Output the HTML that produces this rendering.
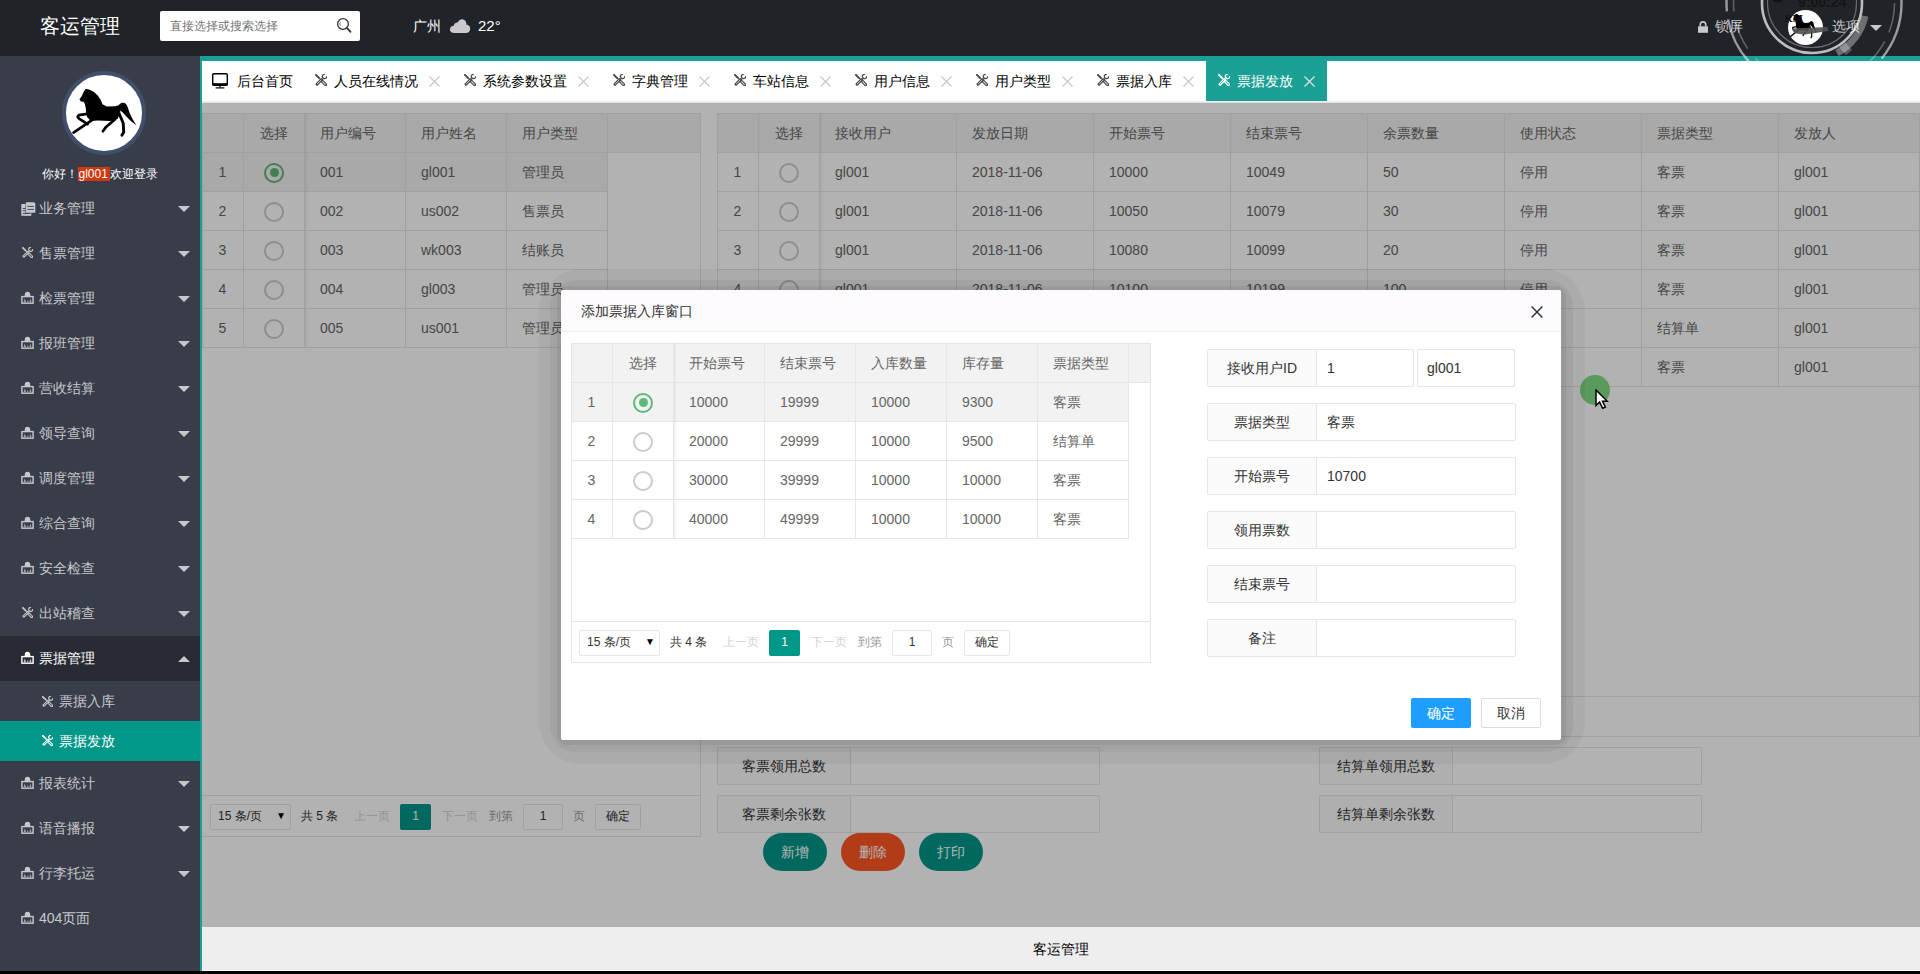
<!DOCTYPE html><html><head><meta charset="utf-8"><style>html,body{margin:0;padding:0}body{width:1920px;height:974px;overflow:hidden;position:relative;background:#fff;font-family:"Liberation Sans",sans-serif}</style></head><body><div style="position:absolute;left:0px;top:0px;width:1920px;height:56px;background:#202328"></div>
<div style="position:absolute;left:40px;top:13.0px;height:26px;line-height:26px;font-size:20px;color:#fff;white-space:nowrap;">客运管理</div>
<div style="position:absolute;left:160px;top:11px;width:200px;height:30px;background:#fff;border-radius:2px"></div>
<div style="position:absolute;left:170px;top:16.5px;height:18px;line-height:18px;font-size:12px;color:#757575;white-space:nowrap;">直接选择或搜索选择</div>
<svg style="position:absolute;left:336px;top:17px" width="17" height="17" viewBox="0 0 17 17"><circle cx="7" cy="7" r="5.4" fill="none" stroke="#333" stroke-width="1.3"/><path d="M4.6 5 A3 3 0 0 0 4.6 9" fill="none" stroke="#666" stroke-width="0.8"/><path d="M10.8 10.8 L14.5 14.8" stroke="#333" stroke-width="1.8" stroke-linecap="round"/></svg>
<div style="position:absolute;left:413px;top:16.0px;height:20px;line-height:20px;font-size:14px;color:#fff;white-space:nowrap;">广州</div>
<svg style="position:absolute;left:449px;top:18px" width="22" height="16" viewBox="0 0 22 16"><path d="M5 15 C1.8 15 0.6 12.8 1 10.8 C1.5 8.6 3.3 7.6 4.8 7.8 C5 5.5 6.8 4.2 8.6 4.6 C9.6 2.3 11.5 1 13.6 1.3 C16.3 1.7 17.6 4 17.4 6.6 C19.8 6.9 21.4 8.8 21.2 11.3 C21 13.6 19.2 15 17 15 Z" fill="#cbc9cc"/></svg>
<div style="position:absolute;left:478px;top:14.5px;height:21px;line-height:21px;font-size:15px;color:#fff;white-space:nowrap;">22°</div>
<svg style="position:absolute;left:1698px;top:20.5px" width="10" height="12" viewBox="0 0 10 12"><path d="M2.3 5.5 V3.6 A2.7 2.7 0 0 1 7.7 3.6 V5.5" fill="none" stroke="#c8c8cc" stroke-width="1.6"/><rect x="0" y="5.3" width="10" height="6.5" fill="#c8c8cc"/></svg>
<div style="position:absolute;left:1715px;top:16.0px;height:20px;line-height:20px;font-size:14px;color:#c8c8cc;white-space:nowrap;">锁屏</div>
<div style="position:absolute;left:1832px;top:16.0px;height:20px;line-height:20px;font-size:14px;color:#c8c8cc;white-space:nowrap;">选项</div>
<div style="position:absolute;left:1870px;top:25px;width:0;height:0;border-left:6px solid transparent;border-right:6px solid transparent;border-top:6px solid #c8c8cc"></div>
<div style="position:absolute;left:0px;top:56px;width:200px;height:915px;background:#393d4a"></div>
<div style="position:absolute;left:62px;top:71px;width:76px;height:76px;border-radius:50%;background:#fff;border:4px solid #40506a"></div>
<svg style="position:absolute;left:60px;top:70px" width="88" height="88" viewBox="0 0 974 974"><path d="M215,325 L240,290 L262,240 L285,208 L330,218 L380,245 L420,285 L450,330 L470,380 L520,405 L610,400 L650,390 L670,420 L665,470 L640,540 L560,565 L420,560 L340,565 L300,520 L290,470 L285,420 L275,375 L262,352 L232,350 Z" fill="#000"/><path d="M640,405 C670,345 735,345 752,420 C770,480 800,545 845,612 C790,575 740,520 700,475 C680,455 660,445 640,435 Z" fill="#000"/><g fill="none" stroke="#000" stroke-linecap="round" stroke-linejoin="round"><path d="M300,485 L210,500 Q180,515 215,540 L305,600" stroke-width="30"/><path d="M370,545 L150,692" stroke-width="30"/><path d="M610,545 L510,630 L475,678" stroke-width="30"/><path d="M650,470 L700,590 L705,690 L685,722" stroke-width="32"/></g></svg>
<div style="position:absolute;left:42px;top:164.5px;height:18px;line-height:18px;font-size:12px;color:#fff;white-space:nowrap;">你好！</div>
<div style="position:absolute;left:78px;top:167px;width:32px;height:14px;background:#d0380f"></div>
<div style="position:absolute;left:78.5px;top:164.5px;height:18px;line-height:18px;font-size:12px;color:#fff;white-space:nowrap;">gl001</div>
<div style="position:absolute;left:110px;top:164.5px;height:18px;line-height:18px;font-size:12px;color:#fff;white-space:nowrap;">欢迎登录</div>
<svg style="position:absolute;left:20.7px;top:202px" width="15" height="14" viewBox="0 0 15 14"><rect x="0.3" y="2" width="10" height="11.8" fill="#c8c8cc"/><path d="M1.8 6.5h3.2M1.8 8.7h3.2M1.8 11.5h7.5" stroke="#393d4a" stroke-width="0.9"/><path d="M4.6 0 H13 L14.6 1.6 V11 H4.6 Z" fill="#c8c8cc" stroke="#393d4a" stroke-width="0.5"/><path d="M6.5 4.4h6.4M6.5 7.4h6.4" stroke="#393d4a" stroke-width="0.9"/></svg>
<div style="position:absolute;left:39px;top:197.5px;height:20px;line-height:20px;font-size:14px;color:#c8c8cc;white-space:nowrap;">业务管理</div>
<div style="position:absolute;left:178px;top:205.5px;width:0;height:0;border-left:6px solid transparent;border-right:6px solid transparent;border-top:6px solid #c8c8cc"></div>
<svg style="position:absolute;left:21.7px;top:247px" width="11" height="11" viewBox="0 0 12 12"><path d="M0.9 0.9 L3.8 3.7" stroke="#c8c8cc" stroke-width="1.9" stroke-linecap="round"/><path d="M3.8 3.7 L6.6 6.6" stroke="#c8c8cc" stroke-width="1.1"/><path d="M7.4 7.4 L10.6 10.6" stroke="#c8c8cc" stroke-width="3.1" stroke-linecap="round"/><path d="M7.7 7.7 L10.3 10.3" stroke="#393d4a" stroke-width="1.1" stroke-linecap="round" opacity="0.8"/><path d="M6.6 5.6 L2 10.2" stroke="#c8c8cc" stroke-width="2.9" stroke-linecap="round"/><path d="M6.0 6.2 L2.4 9.8" stroke="#393d4a" stroke-width="1.0" stroke-linecap="round" opacity="0.8"/><path d="M11.67 2.12 A2.2 2.2 0 1 1 9.88 0.33" fill="none" stroke="#c8c8cc" stroke-width="1.3"/></svg>
<div style="position:absolute;left:39px;top:242.5px;height:20px;line-height:20px;font-size:14px;color:#c8c8cc;white-space:nowrap;">售票管理</div>
<div style="position:absolute;left:178px;top:250.5px;width:0;height:0;border-left:6px solid transparent;border-right:6px solid transparent;border-top:6px solid #c8c8cc"></div>
<svg style="position:absolute;left:20.6px;top:291px" width="13" height="13" viewBox="0 0 13 13"><path d="M3.6 5.2 L4 2 Q6.5 -0.3 9 2 L9.4 5.2 Z" fill="#c8c8cc"/><rect x="0.9" y="5.6" width="11.2" height="6.6" fill="none" stroke="#c8c8cc" stroke-width="1.4"/><path d="M2.5 11.3 L3.8 7.6 L5.1 11.3 Z M6 11.3 L6.8 8.8 L7.6 11.3 Z M8.3 11.3 L9.4 7.6 L10.5 11.3 Z" fill="#c8c8cc" opacity="0.75"/></svg>
<div style="position:absolute;left:39px;top:287.5px;height:20px;line-height:20px;font-size:14px;color:#c8c8cc;white-space:nowrap;">检票管理</div>
<div style="position:absolute;left:178px;top:295.5px;width:0;height:0;border-left:6px solid transparent;border-right:6px solid transparent;border-top:6px solid #c8c8cc"></div>
<svg style="position:absolute;left:20.6px;top:336px" width="13" height="13" viewBox="0 0 13 13"><path d="M3.6 5.2 L4 2 Q6.5 -0.3 9 2 L9.4 5.2 Z" fill="#c8c8cc"/><rect x="0.9" y="5.6" width="11.2" height="6.6" fill="none" stroke="#c8c8cc" stroke-width="1.4"/><path d="M2.5 11.3 L3.8 7.6 L5.1 11.3 Z M6 11.3 L6.8 8.8 L7.6 11.3 Z M8.3 11.3 L9.4 7.6 L10.5 11.3 Z" fill="#c8c8cc" opacity="0.75"/></svg>
<div style="position:absolute;left:39px;top:332.5px;height:20px;line-height:20px;font-size:14px;color:#c8c8cc;white-space:nowrap;">报班管理</div>
<div style="position:absolute;left:178px;top:340.5px;width:0;height:0;border-left:6px solid transparent;border-right:6px solid transparent;border-top:6px solid #c8c8cc"></div>
<svg style="position:absolute;left:20.6px;top:381px" width="13" height="13" viewBox="0 0 13 13"><path d="M3.6 5.2 L4 2 Q6.5 -0.3 9 2 L9.4 5.2 Z" fill="#c8c8cc"/><rect x="0.9" y="5.6" width="11.2" height="6.6" fill="none" stroke="#c8c8cc" stroke-width="1.4"/><path d="M2.5 11.3 L3.8 7.6 L5.1 11.3 Z M6 11.3 L6.8 8.8 L7.6 11.3 Z M8.3 11.3 L9.4 7.6 L10.5 11.3 Z" fill="#c8c8cc" opacity="0.75"/></svg>
<div style="position:absolute;left:39px;top:377.5px;height:20px;line-height:20px;font-size:14px;color:#c8c8cc;white-space:nowrap;">营收结算</div>
<div style="position:absolute;left:178px;top:385.5px;width:0;height:0;border-left:6px solid transparent;border-right:6px solid transparent;border-top:6px solid #c8c8cc"></div>
<svg style="position:absolute;left:20.6px;top:426px" width="13" height="13" viewBox="0 0 13 13"><path d="M3.6 5.2 L4 2 Q6.5 -0.3 9 2 L9.4 5.2 Z" fill="#c8c8cc"/><rect x="0.9" y="5.6" width="11.2" height="6.6" fill="none" stroke="#c8c8cc" stroke-width="1.4"/><path d="M2.5 11.3 L3.8 7.6 L5.1 11.3 Z M6 11.3 L6.8 8.8 L7.6 11.3 Z M8.3 11.3 L9.4 7.6 L10.5 11.3 Z" fill="#c8c8cc" opacity="0.75"/></svg>
<div style="position:absolute;left:39px;top:422.5px;height:20px;line-height:20px;font-size:14px;color:#c8c8cc;white-space:nowrap;">领导查询</div>
<div style="position:absolute;left:178px;top:430.5px;width:0;height:0;border-left:6px solid transparent;border-right:6px solid transparent;border-top:6px solid #c8c8cc"></div>
<svg style="position:absolute;left:20.6px;top:471px" width="13" height="13" viewBox="0 0 13 13"><path d="M3.6 5.2 L4 2 Q6.5 -0.3 9 2 L9.4 5.2 Z" fill="#c8c8cc"/><rect x="0.9" y="5.6" width="11.2" height="6.6" fill="none" stroke="#c8c8cc" stroke-width="1.4"/><path d="M2.5 11.3 L3.8 7.6 L5.1 11.3 Z M6 11.3 L6.8 8.8 L7.6 11.3 Z M8.3 11.3 L9.4 7.6 L10.5 11.3 Z" fill="#c8c8cc" opacity="0.75"/></svg>
<div style="position:absolute;left:39px;top:467.5px;height:20px;line-height:20px;font-size:14px;color:#c8c8cc;white-space:nowrap;">调度管理</div>
<div style="position:absolute;left:178px;top:475.5px;width:0;height:0;border-left:6px solid transparent;border-right:6px solid transparent;border-top:6px solid #c8c8cc"></div>
<svg style="position:absolute;left:20.6px;top:516px" width="13" height="13" viewBox="0 0 13 13"><path d="M3.6 5.2 L4 2 Q6.5 -0.3 9 2 L9.4 5.2 Z" fill="#c8c8cc"/><rect x="0.9" y="5.6" width="11.2" height="6.6" fill="none" stroke="#c8c8cc" stroke-width="1.4"/><path d="M2.5 11.3 L3.8 7.6 L5.1 11.3 Z M6 11.3 L6.8 8.8 L7.6 11.3 Z M8.3 11.3 L9.4 7.6 L10.5 11.3 Z" fill="#c8c8cc" opacity="0.75"/></svg>
<div style="position:absolute;left:39px;top:512.5px;height:20px;line-height:20px;font-size:14px;color:#c8c8cc;white-space:nowrap;">综合查询</div>
<div style="position:absolute;left:178px;top:520.5px;width:0;height:0;border-left:6px solid transparent;border-right:6px solid transparent;border-top:6px solid #c8c8cc"></div>
<svg style="position:absolute;left:20.6px;top:561px" width="13" height="13" viewBox="0 0 13 13"><path d="M3.6 5.2 L4 2 Q6.5 -0.3 9 2 L9.4 5.2 Z" fill="#c8c8cc"/><rect x="0.9" y="5.6" width="11.2" height="6.6" fill="none" stroke="#c8c8cc" stroke-width="1.4"/><path d="M2.5 11.3 L3.8 7.6 L5.1 11.3 Z M6 11.3 L6.8 8.8 L7.6 11.3 Z M8.3 11.3 L9.4 7.6 L10.5 11.3 Z" fill="#c8c8cc" opacity="0.75"/></svg>
<div style="position:absolute;left:39px;top:557.5px;height:20px;line-height:20px;font-size:14px;color:#c8c8cc;white-space:nowrap;">安全检查</div>
<div style="position:absolute;left:178px;top:565.5px;width:0;height:0;border-left:6px solid transparent;border-right:6px solid transparent;border-top:6px solid #c8c8cc"></div>
<svg style="position:absolute;left:21.7px;top:607px" width="11" height="11" viewBox="0 0 12 12"><path d="M0.9 0.9 L3.8 3.7" stroke="#c8c8cc" stroke-width="1.9" stroke-linecap="round"/><path d="M3.8 3.7 L6.6 6.6" stroke="#c8c8cc" stroke-width="1.1"/><path d="M7.4 7.4 L10.6 10.6" stroke="#c8c8cc" stroke-width="3.1" stroke-linecap="round"/><path d="M7.7 7.7 L10.3 10.3" stroke="#393d4a" stroke-width="1.1" stroke-linecap="round" opacity="0.8"/><path d="M6.6 5.6 L2 10.2" stroke="#c8c8cc" stroke-width="2.9" stroke-linecap="round"/><path d="M6.0 6.2 L2.4 9.8" stroke="#393d4a" stroke-width="1.0" stroke-linecap="round" opacity="0.8"/><path d="M11.67 2.12 A2.2 2.2 0 1 1 9.88 0.33" fill="none" stroke="#c8c8cc" stroke-width="1.3"/></svg>
<div style="position:absolute;left:39px;top:602.5px;height:20px;line-height:20px;font-size:14px;color:#c8c8cc;white-space:nowrap;">出站稽查</div>
<div style="position:absolute;left:178px;top:610.5px;width:0;height:0;border-left:6px solid transparent;border-right:6px solid transparent;border-top:6px solid #c8c8cc"></div>
<div style="position:absolute;left:0px;top:636px;width:200px;height:45px;background:#282b33"></div>
<svg style="position:absolute;left:20.6px;top:651px" width="13" height="13" viewBox="0 0 13 13"><path d="M3.6 5.2 L4 2 Q6.5 -0.3 9 2 L9.4 5.2 Z" fill="#fff"/><rect x="0.9" y="5.6" width="11.2" height="6.6" fill="none" stroke="#fff" stroke-width="1.4"/><path d="M2.5 11.3 L3.8 7.6 L5.1 11.3 Z M6 11.3 L6.8 8.8 L7.6 11.3 Z M8.3 11.3 L9.4 7.6 L10.5 11.3 Z" fill="#fff" opacity="0.75"/></svg>
<div style="position:absolute;left:39px;top:647.5px;height:20px;line-height:20px;font-size:14px;color:#fff;white-space:nowrap;">票据管理</div>
<div style="position:absolute;left:178px;top:656px;width:0;height:0;border-left:6px solid transparent;border-right:6px solid transparent;border-bottom:6px solid #c8c8cc"></div>
<svg style="position:absolute;left:42px;top:695.6px" width="11" height="11" viewBox="0 0 12 12"><path d="M0.9 0.9 L3.8 3.7" stroke="#c8c8cc" stroke-width="1.9" stroke-linecap="round"/><path d="M3.8 3.7 L6.6 6.6" stroke="#c8c8cc" stroke-width="1.1"/><path d="M7.4 7.4 L10.6 10.6" stroke="#c8c8cc" stroke-width="3.1" stroke-linecap="round"/><path d="M7.7 7.7 L10.3 10.3" stroke="#393d4a" stroke-width="1.1" stroke-linecap="round" opacity="0.8"/><path d="M6.6 5.6 L2 10.2" stroke="#c8c8cc" stroke-width="2.9" stroke-linecap="round"/><path d="M6.0 6.2 L2.4 9.8" stroke="#393d4a" stroke-width="1.0" stroke-linecap="round" opacity="0.8"/><path d="M11.67 2.12 A2.2 2.2 0 1 1 9.88 0.33" fill="none" stroke="#c8c8cc" stroke-width="1.3"/></svg>
<div style="position:absolute;left:59px;top:691.0px;height:20px;line-height:20px;font-size:14px;color:#c8c8cc;white-space:nowrap;">票据入库</div>
<div style="position:absolute;left:0px;top:721px;width:200px;height:40px;background:#009688"></div>
<svg style="position:absolute;left:42px;top:735px" width="11" height="11" viewBox="0 0 12 12"><path d="M0.9 0.9 L3.8 3.7" stroke="#fff" stroke-width="1.9" stroke-linecap="round"/><path d="M3.8 3.7 L6.6 6.6" stroke="#fff" stroke-width="1.1"/><path d="M7.4 7.4 L10.6 10.6" stroke="#fff" stroke-width="3.1" stroke-linecap="round"/><path d="M7.7 7.7 L10.3 10.3" stroke="#009688" stroke-width="1.1" stroke-linecap="round" opacity="0.8"/><path d="M6.6 5.6 L2 10.2" stroke="#fff" stroke-width="2.9" stroke-linecap="round"/><path d="M6.0 6.2 L2.4 9.8" stroke="#009688" stroke-width="1.0" stroke-linecap="round" opacity="0.8"/><path d="M11.67 2.12 A2.2 2.2 0 1 1 9.88 0.33" fill="none" stroke="#fff" stroke-width="1.3"/></svg>
<div style="position:absolute;left:59px;top:731.0px;height:20px;line-height:20px;font-size:14px;color:#fff;white-space:nowrap;">票据发放</div>
<svg style="position:absolute;left:20.6px;top:776px" width="13" height="13" viewBox="0 0 13 13"><path d="M3.6 5.2 L4 2 Q6.5 -0.3 9 2 L9.4 5.2 Z" fill="#c8c8cc"/><rect x="0.9" y="5.6" width="11.2" height="6.6" fill="none" stroke="#c8c8cc" stroke-width="1.4"/><path d="M2.5 11.3 L3.8 7.6 L5.1 11.3 Z M6 11.3 L6.8 8.8 L7.6 11.3 Z M8.3 11.3 L9.4 7.6 L10.5 11.3 Z" fill="#c8c8cc" opacity="0.75"/></svg>
<div style="position:absolute;left:39px;top:772.5px;height:20px;line-height:20px;font-size:14px;color:#c8c8cc;white-space:nowrap;">报表统计</div>
<div style="position:absolute;left:178px;top:780.5px;width:0;height:0;border-left:6px solid transparent;border-right:6px solid transparent;border-top:6px solid #c8c8cc"></div>
<svg style="position:absolute;left:20.6px;top:821px" width="13" height="13" viewBox="0 0 13 13"><path d="M3.6 5.2 L4 2 Q6.5 -0.3 9 2 L9.4 5.2 Z" fill="#c8c8cc"/><rect x="0.9" y="5.6" width="11.2" height="6.6" fill="none" stroke="#c8c8cc" stroke-width="1.4"/><path d="M2.5 11.3 L3.8 7.6 L5.1 11.3 Z M6 11.3 L6.8 8.8 L7.6 11.3 Z M8.3 11.3 L9.4 7.6 L10.5 11.3 Z" fill="#c8c8cc" opacity="0.75"/></svg>
<div style="position:absolute;left:39px;top:817.5px;height:20px;line-height:20px;font-size:14px;color:#c8c8cc;white-space:nowrap;">语音播报</div>
<div style="position:absolute;left:178px;top:825.5px;width:0;height:0;border-left:6px solid transparent;border-right:6px solid transparent;border-top:6px solid #c8c8cc"></div>
<svg style="position:absolute;left:20.6px;top:866px" width="13" height="13" viewBox="0 0 13 13"><path d="M3.6 5.2 L4 2 Q6.5 -0.3 9 2 L9.4 5.2 Z" fill="#c8c8cc"/><rect x="0.9" y="5.6" width="11.2" height="6.6" fill="none" stroke="#c8c8cc" stroke-width="1.4"/><path d="M2.5 11.3 L3.8 7.6 L5.1 11.3 Z M6 11.3 L6.8 8.8 L7.6 11.3 Z M8.3 11.3 L9.4 7.6 L10.5 11.3 Z" fill="#c8c8cc" opacity="0.75"/></svg>
<div style="position:absolute;left:39px;top:862.5px;height:20px;line-height:20px;font-size:14px;color:#c8c8cc;white-space:nowrap;">行李托运</div>
<div style="position:absolute;left:178px;top:870.5px;width:0;height:0;border-left:6px solid transparent;border-right:6px solid transparent;border-top:6px solid #c8c8cc"></div>
<svg style="position:absolute;left:20.6px;top:911px" width="13" height="13" viewBox="0 0 13 13"><path d="M3.6 5.2 L4 2 Q6.5 -0.3 9 2 L9.4 5.2 Z" fill="#c8c8cc"/><rect x="0.9" y="5.6" width="11.2" height="6.6" fill="none" stroke="#c8c8cc" stroke-width="1.4"/><path d="M2.5 11.3 L3.8 7.6 L5.1 11.3 Z M6 11.3 L6.8 8.8 L7.6 11.3 Z M8.3 11.3 L9.4 7.6 L10.5 11.3 Z" fill="#c8c8cc" opacity="0.75"/></svg>
<div style="position:absolute;left:39px;top:907.5px;height:20px;line-height:20px;font-size:14px;color:#c8c8cc;white-space:nowrap;">404页面</div>
<div style="position:absolute;left:200px;top:56px;width:1720px;height:915px;background:#fff"></div>
<div style="position:absolute;left:200px;top:56px;width:2px;height:915px;background:#1aa094"></div>
<div style="position:absolute;left:202px;top:56px;width:1718px;height:5px;background:#1aa094"></div>
<svg style="position:absolute;left:1700px;top:0" width="220" height="61" viewBox="1700 0 220 61"><circle cx="1812" cy="3" r="50" fill="none" stroke="rgba(255,255,255,.7)" stroke-width="2.6"/><circle cx="1812" cy="3" r="44.5" fill="none" stroke="rgba(255,255,255,.32)" stroke-width="1.2"/><path d="M1865 16 A55 55 0 0 1 1837 53" fill="none" stroke="rgba(255,255,255,.35)" stroke-width="7"/><path d="M1845 42 L1852 50 L1846 55 L1839 47 Z" fill="rgba(255,255,255,.25)"/><circle cx="1814" cy="3" r="87.5" fill="none" stroke="rgba(255,255,255,.55)" stroke-width="2.4" stroke-dasharray="60 8 25 6"/><circle cx="1814" cy="3" r="80.5" fill="none" stroke="rgba(255,255,255,.28)" stroke-width="1.6" stroke-dasharray="30 10 50 12"/></svg>
<div style="position:absolute;left:1788px;top:9.5px;width:35px;height:35px;border-radius:50%;background:#fff;overflow:hidden"></div>
<svg style="position:absolute;left:1785px;top:3.8px" width="37" height="45.5" viewBox="0 0 974 974" preserveAspectRatio="none"><path d="M215,325 L240,290 L262,240 L285,208 L330,218 L380,245 L420,285 L450,330 L470,380 L520,405 L610,400 L650,390 L670,420 L665,470 L640,540 L560,565 L420,560 L340,565 L300,520 L290,470 L285,420 L275,375 L262,352 L232,350 Z" fill="#000"/><path d="M640,405 C670,345 735,345 752,420 C770,480 800,545 845,612 C790,575 740,520 700,475 C680,455 660,445 640,435 Z" fill="#000"/><g fill="none" stroke="#000" stroke-linecap="round" stroke-linejoin="round"><path d="M300,485 L210,500 Q180,515 215,540 L305,600" stroke-width="30"/><path d="M370,545 L150,692" stroke-width="30"/><path d="M610,545 L510,630 L475,678" stroke-width="30"/><path d="M650,470 L700,590 L705,690 L685,722" stroke-width="32"/></g></svg>
<svg style="position:absolute;left:1780px;top:4px" width="60" height="46" viewBox="0 0 60 46"><path d="M11.8 24.6 L47 23 L48.7 27 L23.6 30.7 L14 29 Z" fill="#505050" opacity="0.9"/><text x="4.5" y="17.5" font-family="Liberation Serif" font-weight="bold" font-size="11" fill="#111">RM</text></svg>
<div style="position:absolute;left:1798px;top:-6px;height:16px;line-height:16px;font-size:14px;font-weight:bold;color:#141414;white-space:nowrap">9:00:24</div>
<div style="position:absolute;left:1773px;top:0;width:9px;height:2px;background:#141414"></div>
<div style="position:absolute;left:202px;top:61px;width:1718px;height:40px;background:#fff"></div>
<div style="position:absolute;left:202px;top:101px;width:1718px;height:1px;background:#f0eff0"></div>
<div style="position:absolute;left:202px;top:102px;width:1718px;height:1px;background:#e2e2e2"></div>
<svg style="position:absolute;left:212px;top:72.5px" width="16" height="16" viewBox="0 0 16 16"><rect x="0.7" y="0.7" width="14.6" height="11.6" rx="1.2" fill="none" stroke="#000" stroke-width="1.4"/><rect x="0.7" y="10.2" width="14.6" height="2.1" fill="#000"/><path d="M8 12.3v2" stroke="#000" stroke-width="1.4"/><path d="M3.6 14.9h8.8" stroke="#000" stroke-width="1.2"/></svg>
<div style="position:absolute;left:237px;top:71.0px;height:20px;line-height:20px;font-size:14px;color:#000;white-space:nowrap;">后台首页</div>
<svg style="position:absolute;left:315px;top:74px" width="12" height="12" viewBox="0 0 12 12"><path d="M0.9 0.9 L3.8 3.7" stroke="#484848" stroke-width="1.9" stroke-linecap="round"/><path d="M3.8 3.7 L6.6 6.6" stroke="#484848" stroke-width="1.1"/><path d="M7.4 7.4 L10.6 10.6" stroke="#484848" stroke-width="3.1" stroke-linecap="round"/><path d="M7.7 7.7 L10.3 10.3" stroke="#fff" stroke-width="1.1" stroke-linecap="round" opacity="0.8"/><path d="M6.6 5.6 L2 10.2" stroke="#484848" stroke-width="2.9" stroke-linecap="round"/><path d="M6.0 6.2 L2.4 9.8" stroke="#fff" stroke-width="1.0" stroke-linecap="round" opacity="0.8"/><path d="M11.67 2.12 A2.2 2.2 0 1 1 9.88 0.33" fill="none" stroke="#484848" stroke-width="1.3"/></svg>
<div style="position:absolute;left:334px;top:71.0px;height:20px;line-height:20px;font-size:14px;color:#000;white-space:nowrap;">人员在线情况</div>
<svg style="position:absolute;left:429px;top:76px" width="11" height="11" viewBox="0 0 11 11"><path d="M0.5 0.5 L10.5 10.5 M10.5 0.5 L0.5 10.5" stroke="#c8c8c8" stroke-width="1.2"/></svg>
<svg style="position:absolute;left:464px;top:74px" width="12" height="12" viewBox="0 0 12 12"><path d="M0.9 0.9 L3.8 3.7" stroke="#484848" stroke-width="1.9" stroke-linecap="round"/><path d="M3.8 3.7 L6.6 6.6" stroke="#484848" stroke-width="1.1"/><path d="M7.4 7.4 L10.6 10.6" stroke="#484848" stroke-width="3.1" stroke-linecap="round"/><path d="M7.7 7.7 L10.3 10.3" stroke="#fff" stroke-width="1.1" stroke-linecap="round" opacity="0.8"/><path d="M6.6 5.6 L2 10.2" stroke="#484848" stroke-width="2.9" stroke-linecap="round"/><path d="M6.0 6.2 L2.4 9.8" stroke="#fff" stroke-width="1.0" stroke-linecap="round" opacity="0.8"/><path d="M11.67 2.12 A2.2 2.2 0 1 1 9.88 0.33" fill="none" stroke="#484848" stroke-width="1.3"/></svg>
<div style="position:absolute;left:483px;top:71.0px;height:20px;line-height:20px;font-size:14px;color:#000;white-space:nowrap;">系统参数设置</div>
<svg style="position:absolute;left:578px;top:76px" width="11" height="11" viewBox="0 0 11 11"><path d="M0.5 0.5 L10.5 10.5 M10.5 0.5 L0.5 10.5" stroke="#c8c8c8" stroke-width="1.2"/></svg>
<svg style="position:absolute;left:613px;top:74px" width="12" height="12" viewBox="0 0 12 12"><path d="M0.9 0.9 L3.8 3.7" stroke="#484848" stroke-width="1.9" stroke-linecap="round"/><path d="M3.8 3.7 L6.6 6.6" stroke="#484848" stroke-width="1.1"/><path d="M7.4 7.4 L10.6 10.6" stroke="#484848" stroke-width="3.1" stroke-linecap="round"/><path d="M7.7 7.7 L10.3 10.3" stroke="#fff" stroke-width="1.1" stroke-linecap="round" opacity="0.8"/><path d="M6.6 5.6 L2 10.2" stroke="#484848" stroke-width="2.9" stroke-linecap="round"/><path d="M6.0 6.2 L2.4 9.8" stroke="#fff" stroke-width="1.0" stroke-linecap="round" opacity="0.8"/><path d="M11.67 2.12 A2.2 2.2 0 1 1 9.88 0.33" fill="none" stroke="#484848" stroke-width="1.3"/></svg>
<div style="position:absolute;left:632px;top:71.0px;height:20px;line-height:20px;font-size:14px;color:#000;white-space:nowrap;">字典管理</div>
<svg style="position:absolute;left:699px;top:76px" width="11" height="11" viewBox="0 0 11 11"><path d="M0.5 0.5 L10.5 10.5 M10.5 0.5 L0.5 10.5" stroke="#c8c8c8" stroke-width="1.2"/></svg>
<svg style="position:absolute;left:734px;top:74px" width="12" height="12" viewBox="0 0 12 12"><path d="M0.9 0.9 L3.8 3.7" stroke="#484848" stroke-width="1.9" stroke-linecap="round"/><path d="M3.8 3.7 L6.6 6.6" stroke="#484848" stroke-width="1.1"/><path d="M7.4 7.4 L10.6 10.6" stroke="#484848" stroke-width="3.1" stroke-linecap="round"/><path d="M7.7 7.7 L10.3 10.3" stroke="#fff" stroke-width="1.1" stroke-linecap="round" opacity="0.8"/><path d="M6.6 5.6 L2 10.2" stroke="#484848" stroke-width="2.9" stroke-linecap="round"/><path d="M6.0 6.2 L2.4 9.8" stroke="#fff" stroke-width="1.0" stroke-linecap="round" opacity="0.8"/><path d="M11.67 2.12 A2.2 2.2 0 1 1 9.88 0.33" fill="none" stroke="#484848" stroke-width="1.3"/></svg>
<div style="position:absolute;left:753px;top:71.0px;height:20px;line-height:20px;font-size:14px;color:#000;white-space:nowrap;">车站信息</div>
<svg style="position:absolute;left:820px;top:76px" width="11" height="11" viewBox="0 0 11 11"><path d="M0.5 0.5 L10.5 10.5 M10.5 0.5 L0.5 10.5" stroke="#c8c8c8" stroke-width="1.2"/></svg>
<svg style="position:absolute;left:855px;top:74px" width="12" height="12" viewBox="0 0 12 12"><path d="M0.9 0.9 L3.8 3.7" stroke="#484848" stroke-width="1.9" stroke-linecap="round"/><path d="M3.8 3.7 L6.6 6.6" stroke="#484848" stroke-width="1.1"/><path d="M7.4 7.4 L10.6 10.6" stroke="#484848" stroke-width="3.1" stroke-linecap="round"/><path d="M7.7 7.7 L10.3 10.3" stroke="#fff" stroke-width="1.1" stroke-linecap="round" opacity="0.8"/><path d="M6.6 5.6 L2 10.2" stroke="#484848" stroke-width="2.9" stroke-linecap="round"/><path d="M6.0 6.2 L2.4 9.8" stroke="#fff" stroke-width="1.0" stroke-linecap="round" opacity="0.8"/><path d="M11.67 2.12 A2.2 2.2 0 1 1 9.88 0.33" fill="none" stroke="#484848" stroke-width="1.3"/></svg>
<div style="position:absolute;left:874px;top:71.0px;height:20px;line-height:20px;font-size:14px;color:#000;white-space:nowrap;">用户信息</div>
<svg style="position:absolute;left:941px;top:76px" width="11" height="11" viewBox="0 0 11 11"><path d="M0.5 0.5 L10.5 10.5 M10.5 0.5 L0.5 10.5" stroke="#c8c8c8" stroke-width="1.2"/></svg>
<svg style="position:absolute;left:976px;top:74px" width="12" height="12" viewBox="0 0 12 12"><path d="M0.9 0.9 L3.8 3.7" stroke="#484848" stroke-width="1.9" stroke-linecap="round"/><path d="M3.8 3.7 L6.6 6.6" stroke="#484848" stroke-width="1.1"/><path d="M7.4 7.4 L10.6 10.6" stroke="#484848" stroke-width="3.1" stroke-linecap="round"/><path d="M7.7 7.7 L10.3 10.3" stroke="#fff" stroke-width="1.1" stroke-linecap="round" opacity="0.8"/><path d="M6.6 5.6 L2 10.2" stroke="#484848" stroke-width="2.9" stroke-linecap="round"/><path d="M6.0 6.2 L2.4 9.8" stroke="#fff" stroke-width="1.0" stroke-linecap="round" opacity="0.8"/><path d="M11.67 2.12 A2.2 2.2 0 1 1 9.88 0.33" fill="none" stroke="#484848" stroke-width="1.3"/></svg>
<div style="position:absolute;left:995px;top:71.0px;height:20px;line-height:20px;font-size:14px;color:#000;white-space:nowrap;">用户类型</div>
<svg style="position:absolute;left:1062px;top:76px" width="11" height="11" viewBox="0 0 11 11"><path d="M0.5 0.5 L10.5 10.5 M10.5 0.5 L0.5 10.5" stroke="#c8c8c8" stroke-width="1.2"/></svg>
<svg style="position:absolute;left:1097px;top:74px" width="12" height="12" viewBox="0 0 12 12"><path d="M0.9 0.9 L3.8 3.7" stroke="#484848" stroke-width="1.9" stroke-linecap="round"/><path d="M3.8 3.7 L6.6 6.6" stroke="#484848" stroke-width="1.1"/><path d="M7.4 7.4 L10.6 10.6" stroke="#484848" stroke-width="3.1" stroke-linecap="round"/><path d="M7.7 7.7 L10.3 10.3" stroke="#fff" stroke-width="1.1" stroke-linecap="round" opacity="0.8"/><path d="M6.6 5.6 L2 10.2" stroke="#484848" stroke-width="2.9" stroke-linecap="round"/><path d="M6.0 6.2 L2.4 9.8" stroke="#fff" stroke-width="1.0" stroke-linecap="round" opacity="0.8"/><path d="M11.67 2.12 A2.2 2.2 0 1 1 9.88 0.33" fill="none" stroke="#484848" stroke-width="1.3"/></svg>
<div style="position:absolute;left:1116px;top:71.0px;height:20px;line-height:20px;font-size:14px;color:#000;white-space:nowrap;">票据入库</div>
<svg style="position:absolute;left:1183px;top:76px" width="11" height="11" viewBox="0 0 11 11"><path d="M0.5 0.5 L10.5 10.5 M10.5 0.5 L0.5 10.5" stroke="#c8c8c8" stroke-width="1.2"/></svg>
<div style="position:absolute;left:1206px;top:61px;width:121px;height:40px;background:#1aa094"></div>
<svg style="position:absolute;left:1218px;top:74px" width="12" height="12" viewBox="0 0 12 12"><path d="M0.9 0.9 L3.8 3.7" stroke="#fff" stroke-width="1.9" stroke-linecap="round"/><path d="M3.8 3.7 L6.6 6.6" stroke="#fff" stroke-width="1.1"/><path d="M7.4 7.4 L10.6 10.6" stroke="#fff" stroke-width="3.1" stroke-linecap="round"/><path d="M7.7 7.7 L10.3 10.3" stroke="#1aa094" stroke-width="1.1" stroke-linecap="round" opacity="0.8"/><path d="M6.6 5.6 L2 10.2" stroke="#fff" stroke-width="2.9" stroke-linecap="round"/><path d="M6.0 6.2 L2.4 9.8" stroke="#1aa094" stroke-width="1.0" stroke-linecap="round" opacity="0.8"/><path d="M11.67 2.12 A2.2 2.2 0 1 1 9.88 0.33" fill="none" stroke="#fff" stroke-width="1.3"/></svg>
<div style="position:absolute;left:1237px;top:71.0px;height:20px;line-height:20px;font-size:14px;color:#fff;white-space:nowrap;">票据发放</div>
<svg style="position:absolute;left:1304px;top:76px" width="11" height="11" viewBox="0 0 11 11"><path d="M0.5 0.5 L10.5 10.5 M10.5 0.5 L0.5 10.5" stroke="#e0e0e0" stroke-width="1.2"/></svg>
<div style="position:absolute;left:202px;top:113px;width:499px;height:40px;background:#f2f2f2;border-top:1px solid #e6e6e6;border-bottom:1px solid #e6e6e6;box-sizing:border-box"></div>
<div style="position:absolute;left:202px;top:153px;width:405px;height:39px;background:#f2f2f2;border-bottom:1px solid #e6e6e6;box-sizing:border-box"></div>
<div style="position:absolute;left:202px;top:192px;width:405px;height:39px;background:#fff;border-bottom:1px solid #e6e6e6;box-sizing:border-box"></div>
<div style="position:absolute;left:202px;top:231px;width:405px;height:39px;background:#fff;border-bottom:1px solid #e6e6e6;box-sizing:border-box"></div>
<div style="position:absolute;left:202px;top:270px;width:405px;height:39px;background:#fff;border-bottom:1px solid #e6e6e6;box-sizing:border-box"></div>
<div style="position:absolute;left:202px;top:309px;width:405px;height:39px;background:#fff;border-bottom:1px solid #e6e6e6;box-sizing:border-box"></div>
<div style="position:absolute;left:202px;top:113px;width:1px;height:235px;background:#e6e6e6"></div>
<div style="position:absolute;left:243px;top:113px;width:1px;height:235px;background:#e6e6e6"></div>
<div style="position:absolute;left:304px;top:113px;width:1px;height:235px;background:#e6e6e6"></div>
<div style="position:absolute;left:405px;top:113px;width:1px;height:235px;background:#e6e6e6"></div>
<div style="position:absolute;left:506px;top:113px;width:1px;height:235px;background:#e6e6e6"></div>
<div style="position:absolute;left:607px;top:113px;width:1px;height:235px;background:#e6e6e6"></div>
<div style="position:absolute;left:305px;top:113px;width:3px;height:235px;background:linear-gradient(to right, rgba(0,0,0,.06), rgba(0,0,0,0))"></div>
<div style="position:absolute;left:700px;top:113px;width:1px;height:40px;background:#e6e6e6"></div>
<div style="position:absolute;left:243.5px;top:122.5px;width:60px;height:20px;line-height:20px;text-align:center;font-size:14px;color:#666;white-space:nowrap;">选择</div>
<div style="position:absolute;left:320px;top:122.5px;height:20px;line-height:20px;font-size:14px;color:#666;white-space:nowrap;">用户编号</div>
<div style="position:absolute;left:421px;top:122.5px;height:20px;line-height:20px;font-size:14px;color:#666;white-space:nowrap;">用户姓名</div>
<div style="position:absolute;left:522px;top:122.5px;height:20px;line-height:20px;font-size:14px;color:#666;white-space:nowrap;">用户类型</div>
<div style="position:absolute;left:202.5px;top:161.5px;width:40px;height:20px;line-height:20px;text-align:center;font-size:14px;color:#666;white-space:nowrap;">1</div>
<div style="position:absolute;left:264.0px;top:162.5px;width:16px;height:16px;border-radius:50%;border:2px solid #5fb878"></div>
<div style="position:absolute;left:269.5px;top:168.0px;width:9px;height:9px;border-radius:50%;background:#5fb878"></div>
<div style="position:absolute;left:320px;top:161.5px;height:20px;line-height:20px;font-size:14px;color:#666;white-space:nowrap;">001</div>
<div style="position:absolute;left:421px;top:161.5px;height:20px;line-height:20px;font-size:14px;color:#666;white-space:nowrap;">gl001</div>
<div style="position:absolute;left:522px;top:161.5px;height:20px;line-height:20px;font-size:14px;color:#666;white-space:nowrap;">管理员</div>
<div style="position:absolute;left:202.5px;top:200.5px;width:40px;height:20px;line-height:20px;text-align:center;font-size:14px;color:#666;white-space:nowrap;">2</div>
<div style="position:absolute;left:264.0px;top:201.5px;width:16px;height:16px;border-radius:50%;border:2px solid #cbcbcb"></div>
<div style="position:absolute;left:320px;top:200.5px;height:20px;line-height:20px;font-size:14px;color:#666;white-space:nowrap;">002</div>
<div style="position:absolute;left:421px;top:200.5px;height:20px;line-height:20px;font-size:14px;color:#666;white-space:nowrap;">us002</div>
<div style="position:absolute;left:522px;top:200.5px;height:20px;line-height:20px;font-size:14px;color:#666;white-space:nowrap;">售票员</div>
<div style="position:absolute;left:202.5px;top:239.5px;width:40px;height:20px;line-height:20px;text-align:center;font-size:14px;color:#666;white-space:nowrap;">3</div>
<div style="position:absolute;left:264.0px;top:240.5px;width:16px;height:16px;border-radius:50%;border:2px solid #cbcbcb"></div>
<div style="position:absolute;left:320px;top:239.5px;height:20px;line-height:20px;font-size:14px;color:#666;white-space:nowrap;">003</div>
<div style="position:absolute;left:421px;top:239.5px;height:20px;line-height:20px;font-size:14px;color:#666;white-space:nowrap;">wk003</div>
<div style="position:absolute;left:522px;top:239.5px;height:20px;line-height:20px;font-size:14px;color:#666;white-space:nowrap;">结账员</div>
<div style="position:absolute;left:202.5px;top:278.5px;width:40px;height:20px;line-height:20px;text-align:center;font-size:14px;color:#666;white-space:nowrap;">4</div>
<div style="position:absolute;left:264.0px;top:279.5px;width:16px;height:16px;border-radius:50%;border:2px solid #cbcbcb"></div>
<div style="position:absolute;left:320px;top:278.5px;height:20px;line-height:20px;font-size:14px;color:#666;white-space:nowrap;">004</div>
<div style="position:absolute;left:421px;top:278.5px;height:20px;line-height:20px;font-size:14px;color:#666;white-space:nowrap;">gl003</div>
<div style="position:absolute;left:522px;top:278.5px;height:20px;line-height:20px;font-size:14px;color:#666;white-space:nowrap;">管理员</div>
<div style="position:absolute;left:202.5px;top:317.5px;width:40px;height:20px;line-height:20px;text-align:center;font-size:14px;color:#666;white-space:nowrap;">5</div>
<div style="position:absolute;left:264.0px;top:318.5px;width:16px;height:16px;border-radius:50%;border:2px solid #cbcbcb"></div>
<div style="position:absolute;left:320px;top:317.5px;height:20px;line-height:20px;font-size:14px;color:#666;white-space:nowrap;">005</div>
<div style="position:absolute;left:421px;top:317.5px;height:20px;line-height:20px;font-size:14px;color:#666;white-space:nowrap;">us001</div>
<div style="position:absolute;left:522px;top:317.5px;height:20px;line-height:20px;font-size:14px;color:#666;white-space:nowrap;">管理员</div>
<div style="position:absolute;left:700px;top:113px;width:1px;height:723px;background:#e6e6e6"></div>
<div style="position:absolute;left:202px;top:795px;width:499px;height:42px;border-top:1px solid #e6e6e6;border-bottom:1px solid #e6e6e6;box-sizing:border-box"></div>
<div style="position:absolute;left:210px;top:803.5px;width:81px;height:26px;border:1px solid #e6e6e6;box-sizing:border-box;border-radius:2px;background:#fff"></div>
<div style="position:absolute;left:218px;top:807.0px;height:18px;line-height:18px;font-size:12px;color:#333;white-space:nowrap;">15 条/页</div>
<div style="position:absolute;left:276px;top:808.0px;height:16px;line-height:16px;font-size:10px;color:#000;white-space:nowrap;">▼</div>
<div style="position:absolute;left:301px;top:807.0px;height:18px;line-height:18px;font-size:12px;color:#333;white-space:nowrap;">共 5 条</div>
<div style="position:absolute;left:354px;top:807.0px;height:18px;line-height:18px;font-size:12px;color:#d2d2d2;white-space:nowrap;">上一页</div>
<div style="position:absolute;left:400px;top:803.5px;width:31px;height:26px;background:#009688;border-radius:2px"></div>
<div style="position:absolute;left:400.0px;top:807.0px;width:31px;height:18px;line-height:18px;text-align:center;font-size:12px;color:#fff;white-space:nowrap;">1</div>
<div style="position:absolute;left:442px;top:807.0px;height:18px;line-height:18px;font-size:12px;color:#d2d2d2;white-space:nowrap;">下一页</div>
<div style="position:absolute;left:489px;top:807.0px;height:18px;line-height:18px;font-size:12px;color:#999;white-space:nowrap;">到第</div>
<div style="position:absolute;left:523px;top:803.5px;width:40px;height:26px;border:1px solid #e6e6e6;box-sizing:border-box;border-radius:2px;background:#fff"></div>
<div style="position:absolute;left:523.0px;top:807.0px;width:40px;height:18px;line-height:18px;text-align:center;font-size:12px;color:#333;white-space:nowrap;">1</div>
<div style="position:absolute;left:573px;top:807.0px;height:18px;line-height:18px;font-size:12px;color:#999;white-space:nowrap;">页</div>
<div style="position:absolute;left:595px;top:803.5px;width:46px;height:26px;border:1px solid #e6e6e6;box-sizing:border-box;border-radius:2px;background:#fff"></div>
<div style="position:absolute;left:595.0px;top:807.0px;width:46px;height:18px;line-height:18px;text-align:center;font-size:12px;color:#333;white-space:nowrap;">确定</div>
<div style="position:absolute;left:717px;top:113px;width:1203px;height:40px;background:#f2f2f2;border-top:1px solid #e6e6e6;border-bottom:1px solid #e6e6e6;box-sizing:border-box"></div>
<div style="position:absolute;left:717px;top:153px;width:1203px;height:39px;background:#fff;border-bottom:1px solid #e6e6e6;box-sizing:border-box"></div>
<div style="position:absolute;left:717px;top:192px;width:1203px;height:39px;background:#fff;border-bottom:1px solid #e6e6e6;box-sizing:border-box"></div>
<div style="position:absolute;left:717px;top:231px;width:1203px;height:39px;background:#fff;border-bottom:1px solid #e6e6e6;box-sizing:border-box"></div>
<div style="position:absolute;left:717px;top:270px;width:1203px;height:39px;background:#fff;border-bottom:1px solid #e6e6e6;box-sizing:border-box"></div>
<div style="position:absolute;left:717px;top:309px;width:1203px;height:39px;background:#fff;border-bottom:1px solid #e6e6e6;box-sizing:border-box"></div>
<div style="position:absolute;left:717px;top:348px;width:1203px;height:39px;background:#fff;border-bottom:1px solid #e6e6e6;box-sizing:border-box"></div>
<div style="position:absolute;left:717px;top:113px;width:1px;height:274px;background:#e6e6e6"></div>
<div style="position:absolute;left:758px;top:113px;width:1px;height:274px;background:#e6e6e6"></div>
<div style="position:absolute;left:819px;top:113px;width:1px;height:274px;background:#e6e6e6"></div>
<div style="position:absolute;left:956px;top:113px;width:1px;height:274px;background:#e6e6e6"></div>
<div style="position:absolute;left:1093px;top:113px;width:1px;height:274px;background:#e6e6e6"></div>
<div style="position:absolute;left:1230px;top:113px;width:1px;height:274px;background:#e6e6e6"></div>
<div style="position:absolute;left:1367px;top:113px;width:1px;height:274px;background:#e6e6e6"></div>
<div style="position:absolute;left:1504px;top:113px;width:1px;height:274px;background:#e6e6e6"></div>
<div style="position:absolute;left:1641px;top:113px;width:1px;height:274px;background:#e6e6e6"></div>
<div style="position:absolute;left:1778px;top:113px;width:1px;height:274px;background:#e6e6e6"></div>
<div style="position:absolute;left:1919px;top:113px;width:1px;height:274px;background:#e6e6e6"></div>
<div style="position:absolute;left:820px;top:113px;width:3px;height:274px;background:linear-gradient(to right, rgba(0,0,0,.06), rgba(0,0,0,0))"></div>
<div style="position:absolute;left:1919px;top:113px;width:1px;height:40px;background:#e6e6e6"></div>
<div style="position:absolute;left:758.5px;top:122.5px;width:60px;height:20px;line-height:20px;text-align:center;font-size:14px;color:#666;white-space:nowrap;">选择</div>
<div style="position:absolute;left:835px;top:122.5px;height:20px;line-height:20px;font-size:14px;color:#666;white-space:nowrap;">接收用户</div>
<div style="position:absolute;left:972px;top:122.5px;height:20px;line-height:20px;font-size:14px;color:#666;white-space:nowrap;">发放日期</div>
<div style="position:absolute;left:1109px;top:122.5px;height:20px;line-height:20px;font-size:14px;color:#666;white-space:nowrap;">开始票号</div>
<div style="position:absolute;left:1246px;top:122.5px;height:20px;line-height:20px;font-size:14px;color:#666;white-space:nowrap;">结束票号</div>
<div style="position:absolute;left:1383px;top:122.5px;height:20px;line-height:20px;font-size:14px;color:#666;white-space:nowrap;">余票数量</div>
<div style="position:absolute;left:1520px;top:122.5px;height:20px;line-height:20px;font-size:14px;color:#666;white-space:nowrap;">使用状态</div>
<div style="position:absolute;left:1657px;top:122.5px;height:20px;line-height:20px;font-size:14px;color:#666;white-space:nowrap;">票据类型</div>
<div style="position:absolute;left:1794px;top:122.5px;height:20px;line-height:20px;font-size:14px;color:#666;white-space:nowrap;">发放人</div>
<div style="position:absolute;left:717.5px;top:161.5px;width:40px;height:20px;line-height:20px;text-align:center;font-size:14px;color:#666;white-space:nowrap;">1</div>
<div style="position:absolute;left:779.0px;top:162.5px;width:16px;height:16px;border-radius:50%;border:2px solid #cbcbcb"></div>
<div style="position:absolute;left:835px;top:161.5px;height:20px;line-height:20px;font-size:14px;color:#666;white-space:nowrap;">gl001</div>
<div style="position:absolute;left:972px;top:161.5px;height:20px;line-height:20px;font-size:14px;color:#666;white-space:nowrap;">2018-11-06</div>
<div style="position:absolute;left:1109px;top:161.5px;height:20px;line-height:20px;font-size:14px;color:#666;white-space:nowrap;">10000</div>
<div style="position:absolute;left:1246px;top:161.5px;height:20px;line-height:20px;font-size:14px;color:#666;white-space:nowrap;">10049</div>
<div style="position:absolute;left:1383px;top:161.5px;height:20px;line-height:20px;font-size:14px;color:#666;white-space:nowrap;">50</div>
<div style="position:absolute;left:1520px;top:161.5px;height:20px;line-height:20px;font-size:14px;color:#666;white-space:nowrap;">停用</div>
<div style="position:absolute;left:1657px;top:161.5px;height:20px;line-height:20px;font-size:14px;color:#666;white-space:nowrap;">客票</div>
<div style="position:absolute;left:1794px;top:161.5px;height:20px;line-height:20px;font-size:14px;color:#666;white-space:nowrap;">gl001</div>
<div style="position:absolute;left:717.5px;top:200.5px;width:40px;height:20px;line-height:20px;text-align:center;font-size:14px;color:#666;white-space:nowrap;">2</div>
<div style="position:absolute;left:779.0px;top:201.5px;width:16px;height:16px;border-radius:50%;border:2px solid #cbcbcb"></div>
<div style="position:absolute;left:835px;top:200.5px;height:20px;line-height:20px;font-size:14px;color:#666;white-space:nowrap;">gl001</div>
<div style="position:absolute;left:972px;top:200.5px;height:20px;line-height:20px;font-size:14px;color:#666;white-space:nowrap;">2018-11-06</div>
<div style="position:absolute;left:1109px;top:200.5px;height:20px;line-height:20px;font-size:14px;color:#666;white-space:nowrap;">10050</div>
<div style="position:absolute;left:1246px;top:200.5px;height:20px;line-height:20px;font-size:14px;color:#666;white-space:nowrap;">10079</div>
<div style="position:absolute;left:1383px;top:200.5px;height:20px;line-height:20px;font-size:14px;color:#666;white-space:nowrap;">30</div>
<div style="position:absolute;left:1520px;top:200.5px;height:20px;line-height:20px;font-size:14px;color:#666;white-space:nowrap;">停用</div>
<div style="position:absolute;left:1657px;top:200.5px;height:20px;line-height:20px;font-size:14px;color:#666;white-space:nowrap;">客票</div>
<div style="position:absolute;left:1794px;top:200.5px;height:20px;line-height:20px;font-size:14px;color:#666;white-space:nowrap;">gl001</div>
<div style="position:absolute;left:717.5px;top:239.5px;width:40px;height:20px;line-height:20px;text-align:center;font-size:14px;color:#666;white-space:nowrap;">3</div>
<div style="position:absolute;left:779.0px;top:240.5px;width:16px;height:16px;border-radius:50%;border:2px solid #cbcbcb"></div>
<div style="position:absolute;left:835px;top:239.5px;height:20px;line-height:20px;font-size:14px;color:#666;white-space:nowrap;">gl001</div>
<div style="position:absolute;left:972px;top:239.5px;height:20px;line-height:20px;font-size:14px;color:#666;white-space:nowrap;">2018-11-06</div>
<div style="position:absolute;left:1109px;top:239.5px;height:20px;line-height:20px;font-size:14px;color:#666;white-space:nowrap;">10080</div>
<div style="position:absolute;left:1246px;top:239.5px;height:20px;line-height:20px;font-size:14px;color:#666;white-space:nowrap;">10099</div>
<div style="position:absolute;left:1383px;top:239.5px;height:20px;line-height:20px;font-size:14px;color:#666;white-space:nowrap;">20</div>
<div style="position:absolute;left:1520px;top:239.5px;height:20px;line-height:20px;font-size:14px;color:#666;white-space:nowrap;">停用</div>
<div style="position:absolute;left:1657px;top:239.5px;height:20px;line-height:20px;font-size:14px;color:#666;white-space:nowrap;">客票</div>
<div style="position:absolute;left:1794px;top:239.5px;height:20px;line-height:20px;font-size:14px;color:#666;white-space:nowrap;">gl001</div>
<div style="position:absolute;left:717.5px;top:278.5px;width:40px;height:20px;line-height:20px;text-align:center;font-size:14px;color:#666;white-space:nowrap;">4</div>
<div style="position:absolute;left:779.0px;top:279.5px;width:16px;height:16px;border-radius:50%;border:2px solid #cbcbcb"></div>
<div style="position:absolute;left:835px;top:278.5px;height:20px;line-height:20px;font-size:14px;color:#666;white-space:nowrap;">gl001</div>
<div style="position:absolute;left:972px;top:278.5px;height:20px;line-height:20px;font-size:14px;color:#666;white-space:nowrap;">2018-11-06</div>
<div style="position:absolute;left:1109px;top:278.5px;height:20px;line-height:20px;font-size:14px;color:#666;white-space:nowrap;">10100</div>
<div style="position:absolute;left:1246px;top:278.5px;height:20px;line-height:20px;font-size:14px;color:#666;white-space:nowrap;">10199</div>
<div style="position:absolute;left:1383px;top:278.5px;height:20px;line-height:20px;font-size:14px;color:#666;white-space:nowrap;">100</div>
<div style="position:absolute;left:1520px;top:278.5px;height:20px;line-height:20px;font-size:14px;color:#666;white-space:nowrap;">停用</div>
<div style="position:absolute;left:1657px;top:278.5px;height:20px;line-height:20px;font-size:14px;color:#666;white-space:nowrap;">客票</div>
<div style="position:absolute;left:1794px;top:278.5px;height:20px;line-height:20px;font-size:14px;color:#666;white-space:nowrap;">gl001</div>
<div style="position:absolute;left:717.5px;top:317.5px;width:40px;height:20px;line-height:20px;text-align:center;font-size:14px;color:#666;white-space:nowrap;">5</div>
<div style="position:absolute;left:779.0px;top:318.5px;width:16px;height:16px;border-radius:50%;border:2px solid #cbcbcb"></div>
<div style="position:absolute;left:835px;top:317.5px;height:20px;line-height:20px;font-size:14px;color:#666;white-space:nowrap;">gl001</div>
<div style="position:absolute;left:972px;top:317.5px;height:20px;line-height:20px;font-size:14px;color:#666;white-space:nowrap;">2018-11-06</div>
<div style="position:absolute;left:1109px;top:317.5px;height:20px;line-height:20px;font-size:14px;color:#666;white-space:nowrap;">10200</div>
<div style="position:absolute;left:1246px;top:317.5px;height:20px;line-height:20px;font-size:14px;color:#666;white-space:nowrap;">10299</div>
<div style="position:absolute;left:1383px;top:317.5px;height:20px;line-height:20px;font-size:14px;color:#666;white-space:nowrap;">100</div>
<div style="position:absolute;left:1520px;top:317.5px;height:20px;line-height:20px;font-size:14px;color:#666;white-space:nowrap;">停用</div>
<div style="position:absolute;left:1657px;top:317.5px;height:20px;line-height:20px;font-size:14px;color:#666;white-space:nowrap;">结算单</div>
<div style="position:absolute;left:1794px;top:317.5px;height:20px;line-height:20px;font-size:14px;color:#666;white-space:nowrap;">gl001</div>
<div style="position:absolute;left:717.5px;top:356.5px;width:40px;height:20px;line-height:20px;text-align:center;font-size:14px;color:#666;white-space:nowrap;">6</div>
<div style="position:absolute;left:779.0px;top:357.5px;width:16px;height:16px;border-radius:50%;border:2px solid #cbcbcb"></div>
<div style="position:absolute;left:835px;top:356.5px;height:20px;line-height:20px;font-size:14px;color:#666;white-space:nowrap;">gl001</div>
<div style="position:absolute;left:972px;top:356.5px;height:20px;line-height:20px;font-size:14px;color:#666;white-space:nowrap;">2018-11-06</div>
<div style="position:absolute;left:1109px;top:356.5px;height:20px;line-height:20px;font-size:14px;color:#666;white-space:nowrap;">10300</div>
<div style="position:absolute;left:1246px;top:356.5px;height:20px;line-height:20px;font-size:14px;color:#666;white-space:nowrap;">10399</div>
<div style="position:absolute;left:1383px;top:356.5px;height:20px;line-height:20px;font-size:14px;color:#666;white-space:nowrap;">100</div>
<div style="position:absolute;left:1520px;top:356.5px;height:20px;line-height:20px;font-size:14px;color:#666;white-space:nowrap;">停用</div>
<div style="position:absolute;left:1657px;top:356.5px;height:20px;line-height:20px;font-size:14px;color:#666;white-space:nowrap;">客票</div>
<div style="position:absolute;left:1794px;top:356.5px;height:20px;line-height:20px;font-size:14px;color:#666;white-space:nowrap;">gl001</div>
<div style="position:absolute;left:717px;top:696px;width:1203px;height:41px;border-top:1px solid #e6e6e6;border-bottom:1px solid #e6e6e6;box-sizing:border-box"></div>
<div style="position:absolute;left:1919px;top:386px;width:1px;height:350px;background:#e6e6e6"></div>
<div style="position:absolute;left:717px;top:747px;width:383px;height:38px;border:1px solid #e6e6e6;box-sizing:border-box;border-radius:2px;background:#fff"></div>
<div style="position:absolute;left:717px;top:747px;width:134px;height:38px;border:1px solid #e6e6e6;box-sizing:border-box;border-radius:2px 0 0 2px;background:#fbfbfb"></div>
<div style="position:absolute;left:717.0px;top:756.0px;width:134px;height:20px;line-height:20px;text-align:center;font-size:14px;color:#333;white-space:nowrap;">客票领用总数</div>
<div style="position:absolute;left:717px;top:795px;width:383px;height:38px;border:1px solid #e6e6e6;box-sizing:border-box;border-radius:2px;background:#fff"></div>
<div style="position:absolute;left:717px;top:795px;width:134px;height:38px;border:1px solid #e6e6e6;box-sizing:border-box;border-radius:2px 0 0 2px;background:#fbfbfb"></div>
<div style="position:absolute;left:717.0px;top:804.0px;width:134px;height:20px;line-height:20px;text-align:center;font-size:14px;color:#333;white-space:nowrap;">客票剩余张数</div>
<div style="position:absolute;left:1319px;top:747px;width:383px;height:38px;border:1px solid #e6e6e6;box-sizing:border-box;border-radius:2px;background:#fff"></div>
<div style="position:absolute;left:1319px;top:747px;width:134px;height:38px;border:1px solid #e6e6e6;box-sizing:border-box;border-radius:2px 0 0 2px;background:#fbfbfb"></div>
<div style="position:absolute;left:1319.0px;top:756.0px;width:134px;height:20px;line-height:20px;text-align:center;font-size:14px;color:#333;white-space:nowrap;">结算单领用总数</div>
<div style="position:absolute;left:1319px;top:795px;width:383px;height:38px;border:1px solid #e6e6e6;box-sizing:border-box;border-radius:2px;background:#fff"></div>
<div style="position:absolute;left:1319px;top:795px;width:134px;height:38px;border:1px solid #e6e6e6;box-sizing:border-box;border-radius:2px 0 0 2px;background:#fbfbfb"></div>
<div style="position:absolute;left:1319.0px;top:804.0px;width:134px;height:20px;line-height:20px;text-align:center;font-size:14px;color:#333;white-space:nowrap;">结算单剩余张数</div>
<div style="position:absolute;left:763px;top:833px;width:64px;height:38px;background:#009688;border-radius:19px"></div>
<div style="position:absolute;left:763.0px;top:842.0px;width:64px;height:20px;line-height:20px;text-align:center;font-size:14px;color:#fff;white-space:nowrap;">新增</div>
<div style="position:absolute;left:841px;top:833px;width:64px;height:38px;background:#ff5722;border-radius:19px"></div>
<div style="position:absolute;left:841.0px;top:842.0px;width:64px;height:20px;line-height:20px;text-align:center;font-size:14px;color:#fff;white-space:nowrap;">删除</div>
<div style="position:absolute;left:919px;top:833px;width:64px;height:38px;background:#009688;border-radius:19px"></div>
<div style="position:absolute;left:919.0px;top:842.0px;width:64px;height:20px;line-height:20px;text-align:center;font-size:14px;color:#fff;white-space:nowrap;">打印</div>
<div style="position:absolute;left:202px;top:103px;width:1718px;height:824px;background:rgba(0,0,0,0.3)"></div>
<div style="position:absolute;left:202px;top:927px;width:1718px;height:43px;background:#eeeeee"></div>
<div style="position:absolute;left:202px;top:970px;width:1718px;height:1px;background:#fafafa"></div>
<div style="position:absolute;left:1001.0px;top:939.0px;width:120px;height:20px;line-height:20px;text-align:center;font-size:14px;color:#000;white-space:nowrap;">客运管理</div>
<div style="position:absolute;left:0px;top:971px;width:1920px;height:3px;background:#000"></div>
<div style="position:absolute;left:1580px;top:375px;width:30px;height:30px;border-radius:50%;background:rgba(72,150,76,0.85)"></div>
<svg style="position:absolute;left:1594.5px;top:389px" width="14" height="21" viewBox="0 0 14 21"><path d="M1 1 L1 16.5 L4.6 13 L7.6 19.3 L10.3 18.1 L7.5 12.3 L12.3 12.3 Z" fill="#fff" stroke="#000" stroke-width="1.5" stroke-linejoin="miter"/></svg>
<div style="position:absolute;left:539px;top:269px;width:1046px;height:495px;background:rgba(0,0,0,0.04);border-radius:42px"></div>
<div style="position:absolute;left:550px;top:280px;width:1023px;height:472px;background:rgba(0,0,0,0.045);border-radius:26px"></div>
<div style="position:absolute;left:557px;top:286px;width:1009px;height:459px;background:rgba(0,0,0,0.06);border-radius:10px"></div>
<div style="position:absolute;left:561px;top:290px;width:1000px;height:450px;background:#fff;border-radius:2px"></div>
<div style="position:absolute;left:561px;top:290px;width:1000px;height:42px;background:#fdfbfd;border-bottom:1px solid #eee;box-sizing:border-box;border-radius:2px 2px 0 0"></div>
<div style="position:absolute;left:581px;top:301.0px;height:20px;line-height:20px;font-size:14px;color:#333;white-space:nowrap;">添加票据入库窗口</div>
<svg style="position:absolute;left:1531px;top:306px" width="12" height="12" viewBox="0 0 12 12"><path d="M0.6 0.6 L11.4 11.4 M11.4 0.6 L0.6 11.4" stroke="#2b2b33" stroke-width="1.4"/></svg>
<div style="position:absolute;left:571px;top:343px;width:580px;height:320px;border:1px solid #e6e6e6;box-sizing:border-box"></div>
<div style="position:absolute;left:571px;top:343px;width:580px;height:40px;background:#f2f2f2;border-top:1px solid #e6e6e6;border-bottom:1px solid #e6e6e6;box-sizing:border-box"></div>
<div style="position:absolute;left:571px;top:383px;width:557px;height:39px;background:#f2f2f2;border-bottom:1px solid #e6e6e6;box-sizing:border-box"></div>
<div style="position:absolute;left:571px;top:422px;width:557px;height:39px;background:#fff;border-bottom:1px solid #e6e6e6;box-sizing:border-box"></div>
<div style="position:absolute;left:571px;top:461px;width:557px;height:39px;background:#fff;border-bottom:1px solid #e6e6e6;box-sizing:border-box"></div>
<div style="position:absolute;left:571px;top:500px;width:557px;height:39px;background:#fff;border-bottom:1px solid #e6e6e6;box-sizing:border-box"></div>
<div style="position:absolute;left:571px;top:343px;width:1px;height:196px;background:#e6e6e6"></div>
<div style="position:absolute;left:612px;top:343px;width:1px;height:196px;background:#e6e6e6"></div>
<div style="position:absolute;left:673px;top:343px;width:1px;height:196px;background:#e6e6e6"></div>
<div style="position:absolute;left:764px;top:343px;width:1px;height:196px;background:#e6e6e6"></div>
<div style="position:absolute;left:855px;top:343px;width:1px;height:196px;background:#e6e6e6"></div>
<div style="position:absolute;left:946px;top:343px;width:1px;height:196px;background:#e6e6e6"></div>
<div style="position:absolute;left:1037px;top:343px;width:1px;height:196px;background:#e6e6e6"></div>
<div style="position:absolute;left:1128px;top:343px;width:1px;height:196px;background:#e6e6e6"></div>
<div style="position:absolute;left:674px;top:343px;width:3px;height:196px;background:linear-gradient(to right, rgba(0,0,0,.06), rgba(0,0,0,0))"></div>
<div style="position:absolute;left:1150px;top:343px;width:1px;height:40px;background:#e6e6e6"></div>
<div style="position:absolute;left:612.5px;top:352.5px;width:60px;height:20px;line-height:20px;text-align:center;font-size:14px;color:#666;white-space:nowrap;">选择</div>
<div style="position:absolute;left:689px;top:352.5px;height:20px;line-height:20px;font-size:14px;color:#666;white-space:nowrap;">开始票号</div>
<div style="position:absolute;left:780px;top:352.5px;height:20px;line-height:20px;font-size:14px;color:#666;white-space:nowrap;">结束票号</div>
<div style="position:absolute;left:871px;top:352.5px;height:20px;line-height:20px;font-size:14px;color:#666;white-space:nowrap;">入库数量</div>
<div style="position:absolute;left:962px;top:352.5px;height:20px;line-height:20px;font-size:14px;color:#666;white-space:nowrap;">库存量</div>
<div style="position:absolute;left:1053px;top:352.5px;height:20px;line-height:20px;font-size:14px;color:#666;white-space:nowrap;">票据类型</div>
<div style="position:absolute;left:571.5px;top:391.5px;width:40px;height:20px;line-height:20px;text-align:center;font-size:14px;color:#666;white-space:nowrap;">1</div>
<div style="position:absolute;left:633.0px;top:392.5px;width:16px;height:16px;border-radius:50%;border:2px solid #5fb878"></div>
<div style="position:absolute;left:638.5px;top:398.0px;width:9px;height:9px;border-radius:50%;background:#5fb878"></div>
<div style="position:absolute;left:689px;top:391.5px;height:20px;line-height:20px;font-size:14px;color:#666;white-space:nowrap;">10000</div>
<div style="position:absolute;left:780px;top:391.5px;height:20px;line-height:20px;font-size:14px;color:#666;white-space:nowrap;">19999</div>
<div style="position:absolute;left:871px;top:391.5px;height:20px;line-height:20px;font-size:14px;color:#666;white-space:nowrap;">10000</div>
<div style="position:absolute;left:962px;top:391.5px;height:20px;line-height:20px;font-size:14px;color:#666;white-space:nowrap;">9300</div>
<div style="position:absolute;left:1053px;top:391.5px;height:20px;line-height:20px;font-size:14px;color:#666;white-space:nowrap;">客票</div>
<div style="position:absolute;left:571.5px;top:430.5px;width:40px;height:20px;line-height:20px;text-align:center;font-size:14px;color:#666;white-space:nowrap;">2</div>
<div style="position:absolute;left:633.0px;top:431.5px;width:16px;height:16px;border-radius:50%;border:2px solid #cbcbcb"></div>
<div style="position:absolute;left:689px;top:430.5px;height:20px;line-height:20px;font-size:14px;color:#666;white-space:nowrap;">20000</div>
<div style="position:absolute;left:780px;top:430.5px;height:20px;line-height:20px;font-size:14px;color:#666;white-space:nowrap;">29999</div>
<div style="position:absolute;left:871px;top:430.5px;height:20px;line-height:20px;font-size:14px;color:#666;white-space:nowrap;">10000</div>
<div style="position:absolute;left:962px;top:430.5px;height:20px;line-height:20px;font-size:14px;color:#666;white-space:nowrap;">9500</div>
<div style="position:absolute;left:1053px;top:430.5px;height:20px;line-height:20px;font-size:14px;color:#666;white-space:nowrap;">结算单</div>
<div style="position:absolute;left:571.5px;top:469.5px;width:40px;height:20px;line-height:20px;text-align:center;font-size:14px;color:#666;white-space:nowrap;">3</div>
<div style="position:absolute;left:633.0px;top:470.5px;width:16px;height:16px;border-radius:50%;border:2px solid #cbcbcb"></div>
<div style="position:absolute;left:689px;top:469.5px;height:20px;line-height:20px;font-size:14px;color:#666;white-space:nowrap;">30000</div>
<div style="position:absolute;left:780px;top:469.5px;height:20px;line-height:20px;font-size:14px;color:#666;white-space:nowrap;">39999</div>
<div style="position:absolute;left:871px;top:469.5px;height:20px;line-height:20px;font-size:14px;color:#666;white-space:nowrap;">10000</div>
<div style="position:absolute;left:962px;top:469.5px;height:20px;line-height:20px;font-size:14px;color:#666;white-space:nowrap;">10000</div>
<div style="position:absolute;left:1053px;top:469.5px;height:20px;line-height:20px;font-size:14px;color:#666;white-space:nowrap;">客票</div>
<div style="position:absolute;left:571.5px;top:508.5px;width:40px;height:20px;line-height:20px;text-align:center;font-size:14px;color:#666;white-space:nowrap;">4</div>
<div style="position:absolute;left:633.0px;top:509.5px;width:16px;height:16px;border-radius:50%;border:2px solid #cbcbcb"></div>
<div style="position:absolute;left:689px;top:508.5px;height:20px;line-height:20px;font-size:14px;color:#666;white-space:nowrap;">40000</div>
<div style="position:absolute;left:780px;top:508.5px;height:20px;line-height:20px;font-size:14px;color:#666;white-space:nowrap;">49999</div>
<div style="position:absolute;left:871px;top:508.5px;height:20px;line-height:20px;font-size:14px;color:#666;white-space:nowrap;">10000</div>
<div style="position:absolute;left:962px;top:508.5px;height:20px;line-height:20px;font-size:14px;color:#666;white-space:nowrap;">10000</div>
<div style="position:absolute;left:1053px;top:508.5px;height:20px;line-height:20px;font-size:14px;color:#666;white-space:nowrap;">客票</div>
<div style="position:absolute;left:571px;top:621px;width:580px;height:42px;border-top:1px solid #e6e6e6;border-bottom:1px solid #e6e6e6;box-sizing:border-box"></div>
<div style="position:absolute;left:579px;top:629.5px;width:81px;height:26px;border:1px solid #e6e6e6;box-sizing:border-box;border-radius:2px;background:#fff"></div>
<div style="position:absolute;left:587px;top:633.0px;height:18px;line-height:18px;font-size:12px;color:#333;white-space:nowrap;">15 条/页</div>
<div style="position:absolute;left:645px;top:634.0px;height:16px;line-height:16px;font-size:10px;color:#000;white-space:nowrap;">▼</div>
<div style="position:absolute;left:670px;top:633.0px;height:18px;line-height:18px;font-size:12px;color:#333;white-space:nowrap;">共 4 条</div>
<div style="position:absolute;left:723px;top:633.0px;height:18px;line-height:18px;font-size:12px;color:#d2d2d2;white-space:nowrap;">上一页</div>
<div style="position:absolute;left:769px;top:629.5px;width:31px;height:26px;background:#009688;border-radius:2px"></div>
<div style="position:absolute;left:769.0px;top:633.0px;width:31px;height:18px;line-height:18px;text-align:center;font-size:12px;color:#fff;white-space:nowrap;">1</div>
<div style="position:absolute;left:811px;top:633.0px;height:18px;line-height:18px;font-size:12px;color:#d2d2d2;white-space:nowrap;">下一页</div>
<div style="position:absolute;left:858px;top:633.0px;height:18px;line-height:18px;font-size:12px;color:#999;white-space:nowrap;">到第</div>
<div style="position:absolute;left:892px;top:629.5px;width:40px;height:26px;border:1px solid #e6e6e6;box-sizing:border-box;border-radius:2px;background:#fff"></div>
<div style="position:absolute;left:892.0px;top:633.0px;width:40px;height:18px;line-height:18px;text-align:center;font-size:12px;color:#333;white-space:nowrap;">1</div>
<div style="position:absolute;left:942px;top:633.0px;height:18px;line-height:18px;font-size:12px;color:#999;white-space:nowrap;">页</div>
<div style="position:absolute;left:964px;top:629.5px;width:46px;height:26px;border:1px solid #e6e6e6;box-sizing:border-box;border-radius:2px;background:#fff"></div>
<div style="position:absolute;left:964.0px;top:633.0px;width:46px;height:18px;line-height:18px;text-align:center;font-size:12px;color:#333;white-space:nowrap;">确定</div>
<div style="position:absolute;left:1207px;top:349px;width:110px;height:38px;border:1px solid #e6e6e6;box-sizing:border-box;border-radius:2px 0 0 2px;background:#fbfbfb"></div>
<div style="position:absolute;left:1207.0px;top:358.0px;width:110px;height:20px;line-height:20px;text-align:center;font-size:14px;color:#333;white-space:nowrap;">接收用户ID</div>
<div style="position:absolute;left:1316px;top:349px;width:98px;height:38px;border:1px solid #e6e6e6;box-sizing:border-box;border-radius:0 2px 2px 0;background:#fff"></div>
<div style="position:absolute;left:1327px;top:358.0px;height:20px;line-height:20px;font-size:14px;color:#333;white-space:nowrap;">1</div>
<div style="position:absolute;left:1417px;top:349px;width:98px;height:38px;border:1px solid #e6e6e6;box-sizing:border-box;border-radius:2px;background:#fff"></div>
<div style="position:absolute;left:1427px;top:358.0px;height:20px;line-height:20px;font-size:14px;color:#333;white-space:nowrap;">gl001</div>
<div style="position:absolute;left:1207px;top:403px;width:110px;height:38px;border:1px solid #e6e6e6;box-sizing:border-box;border-radius:2px 0 0 2px;background:#fbfbfb"></div>
<div style="position:absolute;left:1207.0px;top:412.0px;width:110px;height:20px;line-height:20px;text-align:center;font-size:14px;color:#333;white-space:nowrap;">票据类型</div>
<div style="position:absolute;left:1316px;top:403px;width:200px;height:38px;border:1px solid #e6e6e6;box-sizing:border-box;border-radius:0 2px 2px 0;background:#fff"></div>
<div style="position:absolute;left:1327px;top:412.0px;height:20px;line-height:20px;font-size:14px;color:#333;white-space:nowrap;">客票</div>
<div style="position:absolute;left:1207px;top:457px;width:110px;height:38px;border:1px solid #e6e6e6;box-sizing:border-box;border-radius:2px 0 0 2px;background:#fbfbfb"></div>
<div style="position:absolute;left:1207.0px;top:466.0px;width:110px;height:20px;line-height:20px;text-align:center;font-size:14px;color:#333;white-space:nowrap;">开始票号</div>
<div style="position:absolute;left:1316px;top:457px;width:200px;height:38px;border:1px solid #e6e6e6;box-sizing:border-box;border-radius:0 2px 2px 0;background:#fff"></div>
<div style="position:absolute;left:1327px;top:466.0px;height:20px;line-height:20px;font-size:14px;color:#333;white-space:nowrap;">10700</div>
<div style="position:absolute;left:1207px;top:511px;width:110px;height:38px;border:1px solid #e6e6e6;box-sizing:border-box;border-radius:2px 0 0 2px;background:#fbfbfb"></div>
<div style="position:absolute;left:1207.0px;top:520.0px;width:110px;height:20px;line-height:20px;text-align:center;font-size:14px;color:#333;white-space:nowrap;">领用票数</div>
<div style="position:absolute;left:1316px;top:511px;width:200px;height:38px;border:1px solid #e6e6e6;box-sizing:border-box;border-radius:0 2px 2px 0;background:#fff"></div>
<div style="position:absolute;left:1327px;top:520.0px;height:20px;line-height:20px;font-size:14px;color:#333;white-space:nowrap;"></div>
<div style="position:absolute;left:1207px;top:565px;width:110px;height:38px;border:1px solid #e6e6e6;box-sizing:border-box;border-radius:2px 0 0 2px;background:#fbfbfb"></div>
<div style="position:absolute;left:1207.0px;top:574.0px;width:110px;height:20px;line-height:20px;text-align:center;font-size:14px;color:#333;white-space:nowrap;">结束票号</div>
<div style="position:absolute;left:1316px;top:565px;width:200px;height:38px;border:1px solid #e6e6e6;box-sizing:border-box;border-radius:0 2px 2px 0;background:#fff"></div>
<div style="position:absolute;left:1327px;top:574.0px;height:20px;line-height:20px;font-size:14px;color:#333;white-space:nowrap;"></div>
<div style="position:absolute;left:1207px;top:619px;width:110px;height:38px;border:1px solid #e6e6e6;box-sizing:border-box;border-radius:2px 0 0 2px;background:#fbfbfb"></div>
<div style="position:absolute;left:1207.0px;top:628.0px;width:110px;height:20px;line-height:20px;text-align:center;font-size:14px;color:#333;white-space:nowrap;">备注</div>
<div style="position:absolute;left:1316px;top:619px;width:200px;height:38px;border:1px solid #e6e6e6;box-sizing:border-box;border-radius:0 2px 2px 0;background:#fff"></div>
<div style="position:absolute;left:1327px;top:628.0px;height:20px;line-height:20px;font-size:14px;color:#333;white-space:nowrap;"></div>
<div style="position:absolute;left:1411px;top:698px;width:60px;height:30px;background:#1e9fff;border-radius:2px"></div>
<div style="position:absolute;left:1411.0px;top:703.0px;width:60px;height:20px;line-height:20px;text-align:center;font-size:14px;color:#fff;white-space:nowrap;">确定</div>
<div style="position:absolute;left:1481px;top:698px;width:60px;height:30px;border:1px solid #dedede;box-sizing:border-box;border-radius:2px;background:#fff"></div>
<div style="position:absolute;left:1481.0px;top:703.0px;width:60px;height:20px;line-height:20px;text-align:center;font-size:14px;color:#333;white-space:nowrap;">取消</div></body></html>
